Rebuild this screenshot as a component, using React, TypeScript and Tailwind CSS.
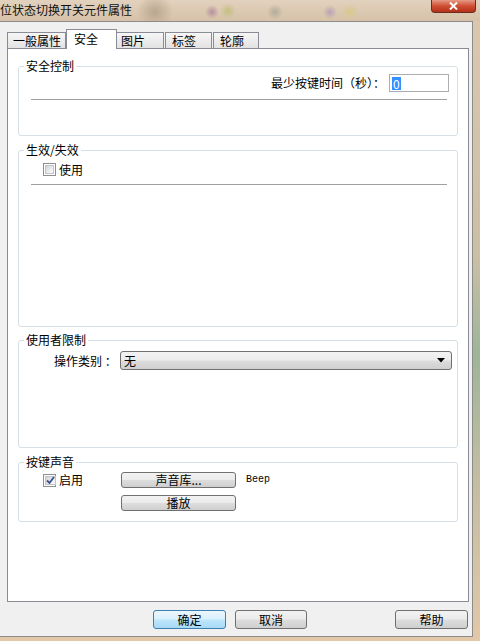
import type { ReactNode } from "react";

// win7 style button, used for bottom row and sound buttons
const btn =
  "rounded-[3px] border border-[#707070] bg-[linear-gradient(180deg,#f2f2f2_0%,#ebebeb_48%,#dddddd_52%,#cfcfcf_100%)] flex items-center justify-center text-[12px] leading-none text-black";

function CheckBox({ checked }: { checked?: boolean }) {
  return (
    <span className="w-[13px] h-[13px] shrink-0 border border-[#8e8f8f] bg-white p-[1px] flex">
      <span className="flex-1 border border-[#c1c5cb] bg-[linear-gradient(135deg,#cfd3d9_0%,#eceef0_60%,#fbfbfb_100%)] flex items-center justify-center">
        {checked && (
          <svg width="9" height="9" viewBox="0 0 9 9">
            <path d="M1 4.5 L3.5 7 L8 1" fill="none" stroke="#3a4f8a" strokeWidth="1.8" />
          </svg>
        )}
      </span>
    </span>
  );
}

function Group({ title, className, children }: { title: string; className: string; children?: ReactNode }) {
  return (
    <div className={"rounded-[3px] border border-[#d5dfe5] flex flex-col " + className}>
      <div className="ml-[5px] -mt-[8px] -mb-[6px] h-[14px] w-fit px-[2px] bg-white leading-[14px] text-[12px]">
        {title}
      </div>
      {children}
    </div>
  );
}

export default function App() {
  return (
    <div className="w-[480px] h-[641px] overflow-hidden flex flex-col text-[12px] text-black font-['Noto_Sans_CJK_SC','Microsoft_YaHei',sans-serif] bg-[linear-gradient(180deg,#dcc7ae_0%,#cbbfa6_40%,#9db598_55%,#c4bda2_75%,#e3c7a8_100%)]">
      {/* title bar */}
      <div className="h-[21px] shrink-0 flex justify-between bg-[radial-gradient(circle_at_155px_12px,#bba78f_0,transparent_18px),radial-gradient(circle_at_212px_12px,#b8909f_0,transparent_7px),radial-gradient(circle_at_228px_11px,#c4c080_0,transparent_8px),radial-gradient(circle_at_275px_12px,#b3ab9b_0,transparent_8px),radial-gradient(circle_at_330px_12px,#b9a2b6_0,transparent_7px),radial-gradient(circle_at_350px_12px,#d9ca8a_0,transparent_8px),linear-gradient(180deg,#e2d1bd,#d6c2a8)]">
        <div className="pt-[3px] leading-[14px] text-[12px] text-[#111]">位状态切换开关元件属性</div>
        <div className="mr-[4px] w-[45px] h-[13px] rounded-b-[4px] border border-t-0 border-[#6e2a1c] bg-[linear-gradient(180deg,#e69b86_0%,#cf4f33_50%,#b3311a_100%)] flex items-center justify-center">
          <svg width="9" height="8" viewBox="0 0 9 8">
            <path d="M1 0.5 L8 7.5 M8 0.5 L1 7.5" stroke="#fff" strokeWidth="2" />
          </svg>
        </div>
      </div>

      {/* client */}
      <div className="w-[473px] h-[616px] shrink-0 bg-[#f0f0f0] border-t border-r border-b border-[#8c8c8c] flex flex-col">
        {/* tabs */}
        <div className="pl-[7px] pt-[7px] h-[27px] -mb-px relative z-10 flex items-end">
          <div className="w-[59px] h-[16px] mb-px border border-b-0 border-[#898c95] bg-[linear-gradient(180deg,#f6f6f6,#e2e2e2)] pl-[5px] leading-[15px]">
            一般属性
          </div>
          <div className="w-[51px] h-[20px] border border-b-0 border-[#898c95] bg-white pl-[7px] pt-[1px] leading-[15px]">
            安全
          </div>
          <div className="w-[47px] h-[16px] mb-px border border-b-0 border-l-0 border-[#898c95] bg-[linear-gradient(180deg,#f6f6f6,#e2e2e2)] pl-[4px] leading-[15px]">
            图片
          </div>
          <div className="w-[47px] h-[16px] mb-px ml-px border border-b-0 border-[#898c95] bg-[linear-gradient(180deg,#f6f6f6,#e2e2e2)] pl-[6px] leading-[15px]">
            标签
          </div>
          <div className="w-[46px] h-[16px] mb-px ml-px border border-b-0 border-[#898c95] bg-[linear-gradient(180deg,#f6f6f6,#e2e2e2)] pl-[6px] leading-[15px]">
            轮廓
          </div>
        </div>

        {/* tab panel */}
        <div className="ml-[7px] w-[462px] h-[554px] shrink-0 border border-[#898c95] bg-white px-[10px] pt-[17px] flex flex-col">
          <Group title="安全控制" className="h-[70px]">
            <div className="mt-[7px] h-[18px] pr-[8px] flex items-center justify-end">
              <span className="leading-[14px]">最少按键时间（秒）：</span>
              <div className="ml-[4px] w-[60px] h-[18px] border border-[#abadb3] bg-white flex items-center pl-[2px]">
                <span className="bg-[#3390ff] text-white leading-[13px] px-px">0</span>
              </div>
            </div>
            <div className="mt-[7px] ml-[12px] mr-[10px] border-t border-[#a0a0a0]" />
          </Group>

          <Group title="生效/失效" className="mt-[14px] h-[177px]">
            <div className="mt-[12px] h-[13px] pl-[24px] flex items-center">
              <CheckBox />
              <span className="ml-[3px] leading-[14px]">使用</span>
            </div>
            <div className="mt-[8px] ml-[12px] mr-[10px] border-t border-[#a0a0a0]" />
          </Group>

          <Group title="使用者限制" className="mt-[13px] h-[108px]">
            <div className="mt-[10px] h-[19px] pl-[35px] flex items-center">
              <span className="w-[66px] leading-[14px]">操作类别 ：</span>
              <div className="w-[332px] h-[19px] rounded-[3px] border border-[#707070] bg-[linear-gradient(180deg,#f2f2f2_0%,#ebebeb_48%,#dddddd_52%,#cfcfcf_100%)] flex items-center pl-[3px] pr-[6px]">
                <span className="flex-1 leading-[14px]">无</span>
                <svg width="8" height="5" viewBox="0 0 8 5">
                  <path d="M0 0 H8 L4 4.5 Z" fill="#000" />
                </svg>
              </div>
            </div>
          </Group>

          <Group title="按键声音" className="mt-[14px] h-[60px]">
            <div className="mt-[9px] h-[16px] pl-[24px] flex items-center">
              <div className="w-[78px] flex items-center">
                <CheckBox checked />
                <span className="ml-[3px] leading-[14px]">启用</span>
              </div>
              <button className={btn + " w-[115px] h-[16px]"}>声音库...</button>
              <span className="ml-[10px] text-[10px] leading-[12px] font-['Liberation_Mono',monospace]">Beep</span>
            </div>
            <div className="mt-[7px] pl-[102px] flex">
              <button className={btn + " w-[115px] h-[16px]"}>播放</button>
            </div>
          </Group>
        </div>

        {/* bottom buttons */}
        <div className="mt-[8px] h-[19px] pl-[153px] pr-[4px] flex">
          <button className="w-[73px] h-[19px] rounded-[3px] border border-[#3c7fb1] bg-[linear-gradient(180deg,#eaf6fd_0%,#d9f0fc_48%,#bee6fd_52%,#a7d9f5_100%)] flex items-center justify-center text-[12px] leading-none">
            确定
          </button>
          <button className={btn + " ml-[9px] w-[72px] h-[19px]"}>取消</button>
          <button className={btn + " ml-auto w-[73px] h-[19px]"}>帮助</button>
        </div>
      </div>
    </div>
  );
}
